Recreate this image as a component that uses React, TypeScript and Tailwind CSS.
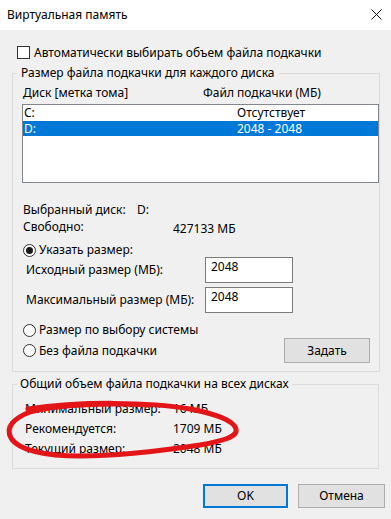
import React from "react";

const font = { fontFamily: '"Noto Sans", "Open Sans", sans-serif' };

function Radio({ checked }: { checked?: boolean }) {
  return (
    <span className="w-[13px] h-[13px] rounded-full border border-[#333333] bg-white flex items-center justify-center shrink-0">
      {checked && <span className="w-[7px] h-[7px] rounded-full bg-[#1a1a1a]" />}
    </span>
  );
}

export default function App() {
  return (
    <div
      className="relative w-[391px] h-[519px] bg-[#f0f0f0] overflow-hidden text-[12px] leading-[16px] text-black"
      style={font}
    >
      {/* title bar */}
      <div className="h-[30px] bg-white flex items-center justify-between pl-[7px] pr-[9px]">
        <span className="text-[12px]">Виртуальная память</span>
        <svg width="11" height="11" viewBox="0 0 11 11" className="mt-[-1px]">
          <path d="M0.5 0.5 L10.5 10.5 M10.5 0.5 L0.5 10.5" stroke="#111" strokeWidth="1" fill="none" />
        </svg>
      </div>

      {/* checkbox */}
      <div className="mt-[16px] pl-[17px] h-[13px] flex items-center gap-[4px]">
        <span className="w-[13px] h-[13px] border border-[#333333] bg-white shrink-0" />
        <span>Автоматически выбирать объем файла подкачки</span>
      </div>

      {/* group 1 */}
      <fieldset className="mt-[6px] ml-[12px] w-[368px] border border-[#dcdcdc] pl-[4px] pb-[8px]">
        <legend className="px-[4px] leading-[16px]">Размер файла подкачки для каждого диска</legend>
        <div className="pl-[5px]">
          <div className="mt-[4px] h-[16px] flex">
            <span className="pl-[1px] w-[181px]">Диск [метка тома]</span>
            <span>Файл подкачки (МБ)</span>
          </div>
          <div className="mt-[3px] w-[357px] h-[79px] border border-[#82878f] bg-white">
            <div className="h-[16px] flex">
              <span className="pl-[1px] w-[214px]">C:</span>
              <span>Отсутствует</span>
            </div>
            <div className="h-[15px] flex items-center bg-[#0078d7] text-white">
              <span className="pl-[1px] w-[214px]">D:</span>
              <span>2048 - 2048</span>
            </div>
          </div>

          <div className="mt-[19px] h-[16px] flex">
            <span className="pl-[1px] w-[115px]">Выбранный диск:</span>
            <span>D:</span>
          </div>
          <div className="mt-[1px] h-[16px] flex">
            <span className="pl-[1px] w-[151px]">Свободно:</span>
            <span className="mt-[2px]">427133 МБ</span>
          </div>

          <div className="mt-[8px] h-[14px] flex items-center gap-[3px] pl-[1px]">
            <Radio checked />
            <span>Указать размер:</span>
          </div>
          <div className="h-[26px] flex items-center">
            <span className="pl-[4px] w-[183px]">Исходный размер (МБ):</span>
            <div className="w-[88px] h-[26px] border border-[#7a7a7a] bg-white pl-[5px] pt-[1px]">2048</div>
          </div>
          <div className="mt-[4px] h-[26px] flex items-center">
            <span className="pl-[4px] w-[183px]">Максимальный размер (МБ):</span>
            <div className="w-[88px] h-[26px] border border-[#7a7a7a] bg-white pl-[5px] pt-[1px]">2048</div>
          </div>

          <div className="mt-[10px] h-[14px] flex items-center gap-[3px] pl-[1px]">
            <Radio />
            <span>Размер по выбору системы</span>
          </div>
          <div className="mt-[1px] h-[25px] flex items-center">
            <div className="flex items-center gap-[3px] pl-[1px] w-[262px]">
              <Radio />
              <span>Без файла подкачки</span>
            </div>
            <button className="w-[86px] h-[25px] border border-[#adadad] bg-[#e1e1e1] flex items-center justify-center">
              Задать
            </button>
          </div>
        </div>
      </fieldset>

      {/* group 2 */}
      <fieldset className="mt-[4px] ml-[12px] w-[367px] border border-[#dcdcdc] pl-[4px] pb-[9px]">
        <legend className="px-[3px] leading-[16px]">Общий объем файла подкачки на всех дисках</legend>
        <div className="pl-[8px] mt-[7px]">
          <div className="h-[20px] flex items-center">
            <span className="w-[148px]">Минимальный размер:</span>
            <span>16 МБ</span>
          </div>
          <div className="h-[20px] flex items-center">
            <span className="w-[148px]">Рекомендуется:</span>
            <span>1709 МБ</span>
          </div>
          <div className="h-[20px] flex items-center">
            <span className="w-[148px]">Текущий размер:</span>
            <span>2048 МБ</span>
          </div>
        </div>
      </fieldset>

      {/* buttons */}
      <div className="mt-[15px] flex pl-[203px] gap-[10px]">
        <button className="w-[85px] h-[24px] border-2 border-[#0078d7] bg-[#e1e1e1] flex items-center justify-center">
          OK
        </button>
        <button className="w-[87px] h-[24px] border border-[#adadad] bg-[#e1e1e1] flex items-center justify-center">
          Отмена
        </button>
      </div>

      {/* red hand-drawn ellipse */}
      <svg
        className="absolute left-0 top-0 pointer-events-none"
        width="391"
        height="519"
        viewBox="0 0 391 519"
      >
        <path
          d="M28 409 C80 401 150 402 190 409 C215 414 234 420 236 429 C238 437 222 441 200 445 C160 451 120 456 80 456 C45 456 18 450 11 438 C5 427 14 418 30 412 C60 404 110 403 150 405"
          stroke="#e31519"
          strokeWidth="5"
          fill="none"
          strokeLinecap="round"
        />
      </svg>
    </div>
  );
}
